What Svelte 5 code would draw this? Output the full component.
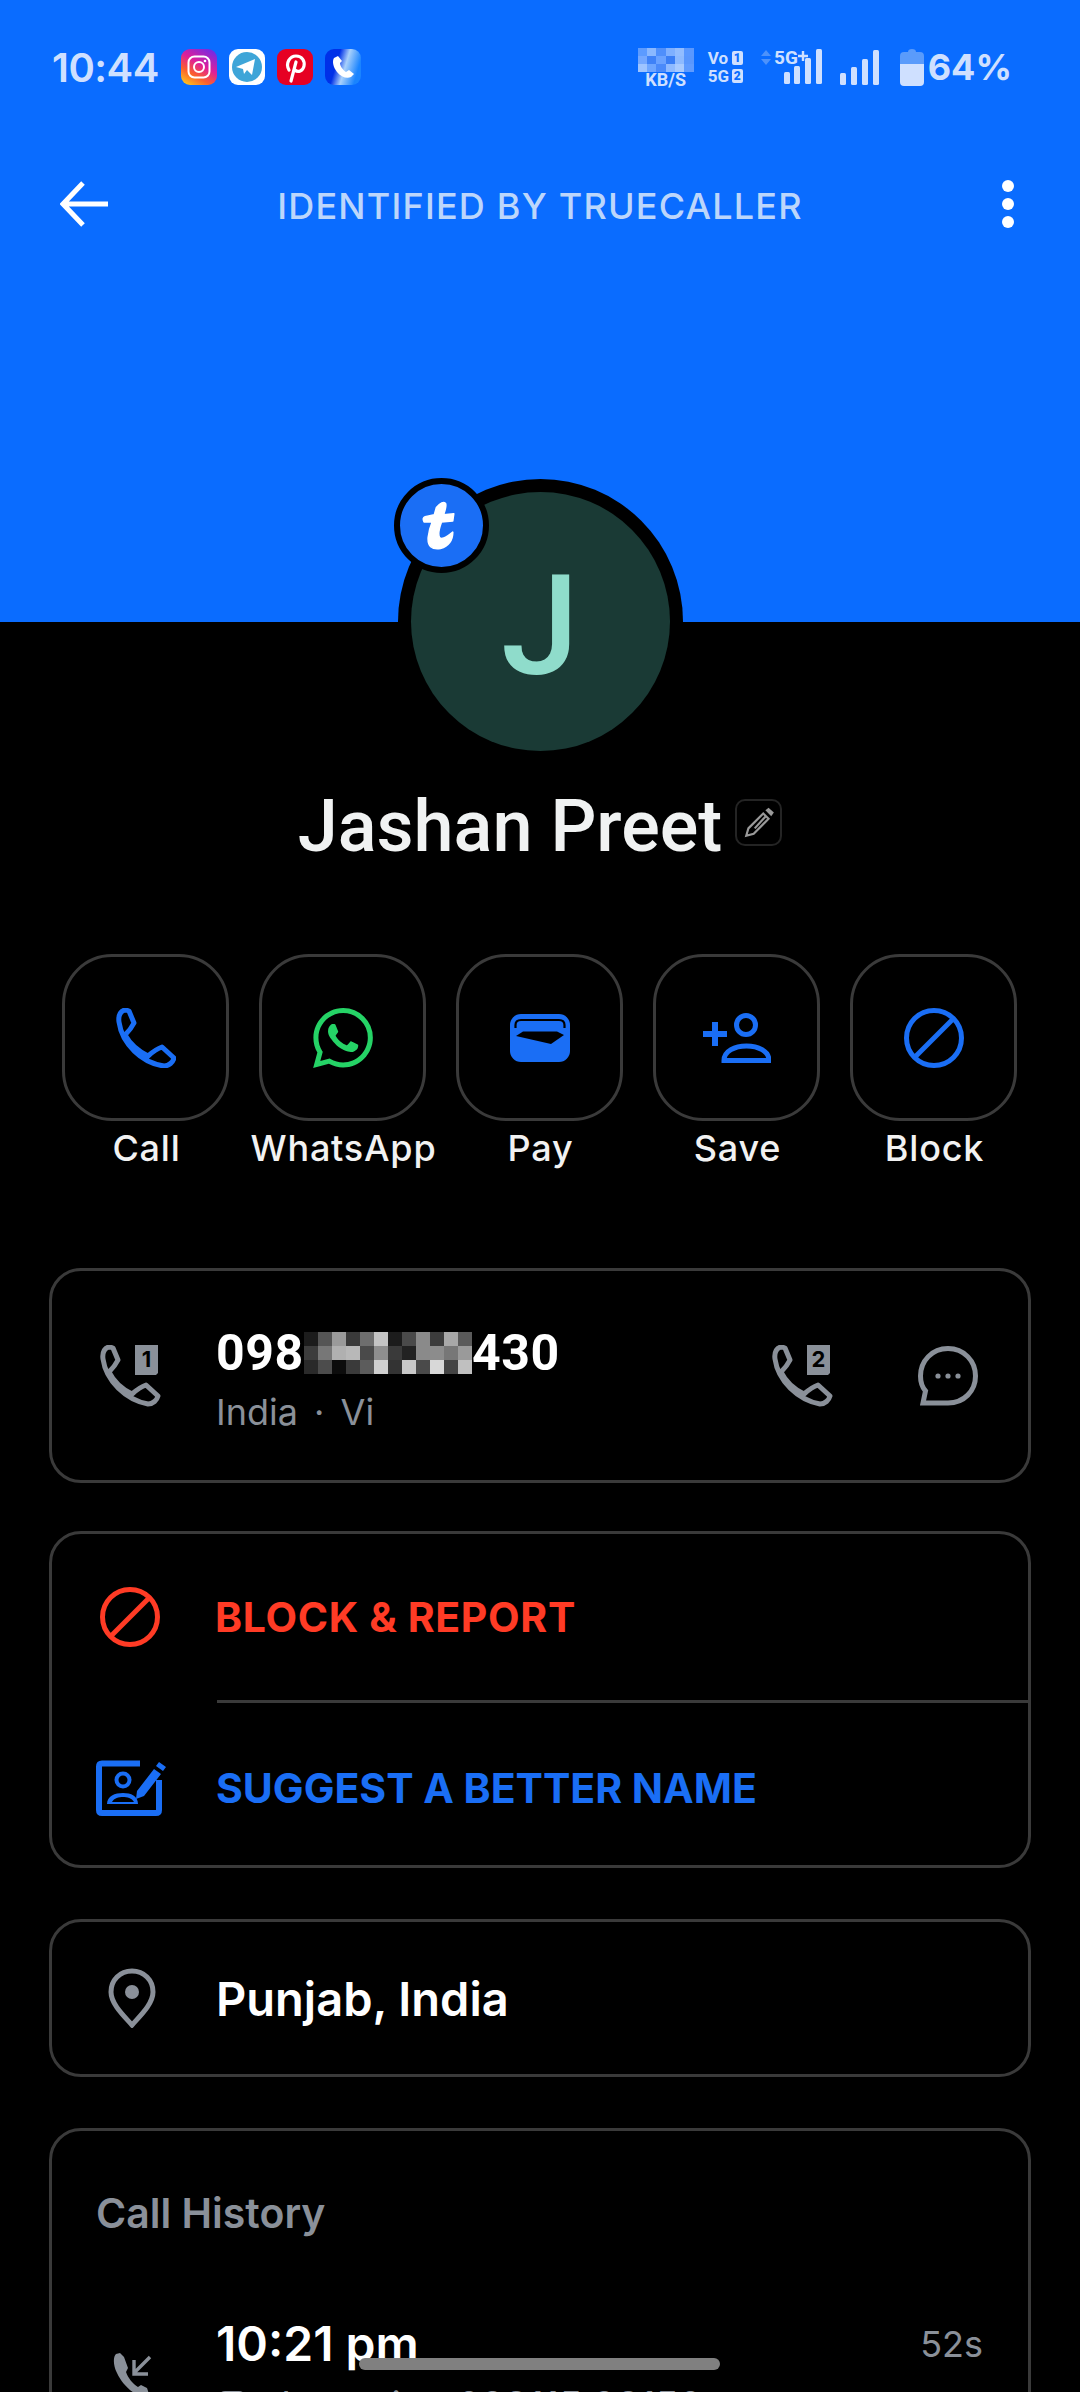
<script>
  const blue = '#1a6ef5';
  const actions = ['Call', 'WhatsApp', 'Pay', 'Save', 'Block'];
  const maskRows = [
    ['#1c1c1c','#555','#9a9a9a','#3a3a3a','#6e6e6e','#c4c4c4','#1c1c1c','#4a4a4a','#8a8a8a','#3c3c3c','#a8a8a8','#5a5a5a'],
    ['#3c3c3c','#777','#b0b0b0','#b8b8b8','#4a4a4a','#8e8e8e','#3a3a3a','#222','#8a8a8a','#8c8c8c','#777','#9a9a9a'],
    ['#2a2a2a','#4c4c4c','#0c0c0c','#3a3a3a','#5c5c5c','#d0d0d0','#333','#c8c8c8','#4a4a4a','#d8d8d8','#444','#c0c0c0']
  ];
  const speedMask = ['#5c9bff','#8ab8ff','#4f8ffb','#7fb0ff','#93bdff','#5a98ff','#74a8ff','#3f82f7','#6aa2ff','#3a7ef5','#8ebaff','#5a97fd','#9ec4ff','#6ea6ff','#4a8afa','#8fbaff','#a8caff','#5f9bff'];
</script>

<div class="screen">
  <header class="hero">
    <div class="status">
      <span class="time">10:44</span>
      <div class="apps">
        <svg class="app" viewBox="0 0 36 36">
          <defs>
            <linearGradient id="ig" x1="0.15" y1="1" x2="0.75" y2="0">
              <stop offset="0" stop-color="#fdc41e"/><stop offset=".3" stop-color="#fb5f2c"/><stop offset=".6" stop-color="#df1f9a"/><stop offset="1" stop-color="#7a2ae0"/>
            </linearGradient>
          </defs>
          <rect width="36" height="36" rx="9" fill="url(#ig)"/>
          <rect x="7.5" y="7.5" width="21" height="21" rx="6" fill="none" stroke="#fff" stroke-width="2"/>
          <circle cx="18" cy="18" r="5" fill="none" stroke="#fff" stroke-width="2"/>
          <circle cx="24" cy="12" r="1.3" fill="#fff"/>
        </svg>
        <svg class="app" viewBox="0 0 36 36">
          <rect width="36" height="36" rx="9" fill="#fff"/>
          <circle cx="18" cy="18" r="15" fill="#3ea5d8"/>
          <path d="M7 18 L26 10 L23 26 L18 21 L15 25 L14 20 Z" fill="#fff"/>
        </svg>
        <svg class="app" viewBox="0 0 36 36">
          <rect width="36" height="36" rx="9" fill="#e60023"/>
          <path d="M12 21 C8 14 13 7 19 7 C25 7 28 12 27 17 C26 22 21 24 18 21 M19 13 L14 32" fill="none" stroke="#fff" stroke-width="3.2" stroke-linecap="round"/>
        </svg>
        <svg class="app" viewBox="0 0 36 36">
          <defs>
            <linearGradient id="tc" x1="0" y1="0" x2="1" y2="0.3">
              <stop offset=".4" stop-color="#0030e8"/><stop offset=".65" stop-color="#a8d0fb"/><stop offset="1" stop-color="#1a84ff"/>
            </linearGradient>
          </defs>
          <rect width="36" height="36" rx="9" fill="url(#tc)"/>
          <path d="M9 9 C7 12 8 18 12 23 C16 28 22 30 26 28 L29 25 L24 21 L21 23 C18 21 15 17 15 14 L17 12 L13 7 Z" fill="#fff"/>
        </svg>
      </div>
      <div class="indicators">
        <div class="speed">
          <div class="speed-mask">
            {#each speedMask as c}<i style="background:{c}"></i>{/each}
          </div>
          <span>KB/S</span>
        </div>
        <div class="volte">
          <div><span>Vo</span><b>1</b></div>
          <div><span>5G</span><b>2</b></div>
        </div>
        <svg class="signal-a" viewBox="0 0 66 38">
          <path d="M1 8 L6 2 L11 8 Z M1 11 L6 17 L11 11 Z" fill="#4d92fb"/>
          <rect x="24" y="24" width="6" height="12" rx="1.5" fill="#cfe0ff"/>
          <rect x="34" y="18" width="6" height="18" rx="1.5" fill="#cfe0ff"/>
          <rect x="45" y="10" width="6" height="26" rx="1.5" fill="#cfe0ff"/>
          <rect x="56" y="1" width="6" height="35" rx="1.5" fill="#cfe0ff"/>
          <text x="14" y="16" class="fiveg">5G</text>
          <path d="M43 3 V13 M38 8 H48" stroke="#cfe0ff" stroke-width="2.4"/>
        </svg>
        <svg class="signal-b" viewBox="0 0 39 36">
          <rect x="0" y="24" width="6" height="12" rx="1.5" fill="#cfe0ff"/>
          <rect x="11" y="18" width="6" height="18" rx="1.5" fill="#cfe0ff"/>
          <rect x="22" y="10" width="6" height="26" rx="1.5" fill="#cfe0ff"/>
          <rect x="33" y="1" width="6" height="35" rx="1.5" fill="#cfe0ff"/>
        </svg>
        <svg class="battery" viewBox="0 0 24 37">
          <path d="M8 3 Q8 0 12 0 Q16 0 16 3 H20 Q24 3 24 7 V15 H0 V7 Q0 3 4 3 Z" fill="#5a9bfb"/>
          <path d="M0 15 H24 V33 Q24 37 20 37 H4 Q0 37 0 33 Z" fill="#cfe0ff"/>
        </svg>
        <span class="percent">64%</span>
      </div>
    </div>
    <div class="topbar">
      <svg class="back" viewBox="0 0 48 48">
        <path d="M23 3 L3 24 L23 45 M3 24 H48" fill="none" stroke="#fff" stroke-width="5"/>
      </svg>
      <span class="title">IDENTIFIED BY TRUECALLER</span>
      <div class="dots"><i></i><i></i><i></i></div>
    </div>
  </header>

  <div class="avatar-ring">
    <div class="avatar">J</div>
    <div class="badge">
      <svg viewBox="0 0 40 50" width="41" height="52">
        <path d="M15 7 Q21 0 24 3 Q25 6 22 14 L32 13 L31 20 L20 21 Q16 32 18 36 Q20 40 31 31 Q31 43 19 47 Q6 49 7 36 Q8 28 11 21 L3 21 Q1 17 4 16 L13 14 Z" fill="#fff" stroke="#fff" stroke-width="1.5" stroke-linejoin="round"/>
      </svg>
    </div>
  </div>

  <div class="name-row">
    <h1>Jashan Preet</h1>
    <span class="edit">
      <svg viewBox="0 0 32 32" width="34" height="34">
        <path d="M6 22 L20 8 L25 13 L11 27 L4 29 Z M12 22 L22 11" fill="none" stroke="#9a9a9a" stroke-width="2"/>
        <path d="M22 5 L25 2.5 L30 7 L27.5 10.5 Z" fill="#9a9a9a"/>
      </svg>
    </span>
  </div>

  <div class="actions">
    {#each actions as label, i}
      <div class="action">
        <div class="tile">
          {#if i === 0}
            <svg viewBox="0 0 60 60" width="60" height="60">
              <path d="M10 2 C5 2 2 7 3 14 C6 36 26 55 48 58 C53 58 57 54 58 50 L46 39 Q40 41 32 48 C22 43 14 36 9 27 Q15 21 18 15 L13 3 Z" fill="none" stroke={blue} stroke-width="5" stroke-linejoin="round"/>
            </svg>
          {:else if i === 1}
            <svg viewBox="0 0 24 24" width="60" height="60">
              <path fill="#25d366" d="M17.472 14.382c-.297-.149-1.758-.867-2.03-.967-.273-.099-.471-.148-.67.15-.197.297-.767.966-.94 1.164-.173.199-.347.223-.644.075-.297-.15-1.255-.463-2.39-1.475-.883-.788-1.48-1.761-1.653-2.059-.173-.297-.018-.458.13-.606.134-.133.298-.347.446-.52.149-.174.198-.298.298-.497.099-.198.05-.371-.025-.52-.075-.149-.669-1.612-.916-2.207-.242-.579-.487-.5-.669-.51-.173-.008-.371-.01-.57-.01-.198 0-.52.074-.792.372-.272.297-1.04 1.016-1.04 2.479 0 1.462 1.065 2.875 1.213 3.074.149.198 2.096 3.2 5.077 4.487.709.306 1.262.489 1.694.625.712.227 1.36.195 1.871.118.571-.085 1.758-.719 2.006-1.413.248-.694.248-1.289.173-1.413-.074-.124-.272-.198-.57-.347m-5.421 7.403h-.004a9.87 9.87 0 01-5.031-1.378l-.361-.214-3.741.982.998-3.648-.235-.374a9.86 9.86 0 01-1.51-5.26c.001-5.45 4.436-9.884 9.888-9.884 2.64 0 5.122 1.03 6.988 2.898a9.825 9.825 0 012.893 6.994c-.003 5.45-4.437 9.884-9.885 9.884m8.413-18.297A11.815 11.815 0 0012.05 0C5.495 0 .16 5.335.157 11.892c0 2.096.547 4.142 1.588 5.945L.057 24l6.305-1.654a11.882 11.882 0 005.683 1.448h.005c6.554 0 11.89-5.335 11.893-11.893a11.821 11.821 0 00-3.48-8.413z"/>
            </svg>
          {:else if i === 2}
            <svg viewBox="0 0 60 48" width="60" height="48">
              <rect width="60" height="48" rx="11" fill={blue}/>
              <path d="M5.5 14 V11 Q5.5 6 11 6 H49 Q54.5 6 54.5 11 V14" fill="none" stroke="#000" stroke-width="2.2"/>
              <path d="M6 22 L13 17.5 H47 L54 21 L41 30 Z" fill="#000"/>
            </svg>
          {:else if i === 3}
            <svg viewBox="0 0 68 50" width="68" height="50">
              <circle cx="43" cy="12" r="9.5" fill="none" stroke={blue} stroke-width="5"/>
              <path d="M0 21 H24 M12 9 V33" stroke={blue} stroke-width="6"/>
              <path d="M21 47.5 C21 38 32 33 43.5 33 C55 33 66 38 66 47.5 Z" fill="none" stroke={blue} stroke-width="5"/>
            </svg>
          {:else}
            <svg viewBox="0 0 60 60" width="60" height="60">
              <circle cx="30" cy="30" r="27.5" fill="none" stroke={blue} stroke-width="5"/>
              <path d="M11 49 L49 11" stroke={blue} stroke-width="5"/>
            </svg>
          {/if}
        </div>
        <span class="action-label">{label}</span>
      </div>
    {/each}
  </div>

  <section class="card number-card">
    <svg class="line-icon" viewBox="0 0 62 62" width="62" height="62">
      <path d="M10 2 C5 2 2 7 3 14 C6 36 26 55 48 59 C53 59 57 55 58 51 L46 40 Q40 42 32 49 C22 44 14 37 9 27 Q15 21 18 15 L13 3 Z" fill="none" stroke="#8a9099" stroke-width="5" stroke-linejoin="round"/>
      <path d="M35 0 H58 V28 L56 30 H35 Z" fill="#8a9099"/>
      <text x="46.5" y="22" class="sim">1</text>
    </svg>
    <div class="number-text">
      <div class="number">
        <span>098</span>
        <div class="mask">
          {#each maskRows as row}
            {#each row as c}<i style="background:{c}"></i>{/each}
          {/each}
        </div>
        <span>430</span>
      </div>
      <div class="carrier">India <em>·</em> Vi</div>
    </div>
    <svg class="sim-two" viewBox="0 0 62 62" width="62" height="62">
      <path d="M10 2 C5 2 2 7 3 14 C6 36 26 55 48 59 C53 59 57 55 58 51 L46 40 Q40 42 32 49 C22 44 14 37 9 27 Q15 21 18 15 L13 3 Z" fill="none" stroke="#8a9099" stroke-width="5" stroke-linejoin="round"/>
      <path d="M35 0 H58 V28 L56 30 H35 Z" fill="#8a9099"/>
      <text x="46.5" y="22" class="sim">2</text>
    </svg>
    <svg class="message" viewBox="0 0 60 60" width="60" height="60">
      <path d="M5 57 L7.5 45 C4 41 2.5 36 2.5 30 C2.5 15 14 2.5 30 2.5 C46 2.5 57.5 15 57.5 30 C57.5 45 46 57 30 57 Z" fill="none" stroke="#8a9099" stroke-width="5"/>
      <circle cx="20" cy="30" r="2.6" fill="#8a9099"/><circle cx="30" cy="30" r="2.6" fill="#8a9099"/><circle cx="40" cy="30" r="2.6" fill="#8a9099"/>
    </svg>
  </section>

  <section class="card actions-card">
    <div class="row row-red">
      <svg viewBox="0 0 60 60" width="60" height="60">
        <circle cx="30" cy="30" r="27.5" fill="none" stroke="#ff3b25" stroke-width="5"/>
        <path d="M11 49 L49 11" stroke="#ff3b25" stroke-width="5"/>
      </svg>
      <span>BLOCK &amp; REPORT</span>
    </div>
    <div class="divider"></div>
    <div class="row row-blue">
      <svg viewBox="0 0 70 56" width="70" height="56">
        <path d="M44 3.5 H6 Q3 3.5 3 6.5 V50 Q3 53 6 53 H60 Q63 53 63 50 V20" fill="none" stroke={blue} stroke-width="6"/>
        <path d="M41 31 L58 9 L65 14 L48 36 L40 39 Z M60 6 L63 2 L70 7 L67 11 Z" fill={blue}/>
        <circle cx="27" cy="20" r="6.5" fill="none" stroke={blue} stroke-width="4"/>
        <path d="M11 44 C11 36 19 33 27 33 C35 33 42 36 42 44 Z M16 42 H38 C36 38 31 37 27 37 C23 37 18 38 16 42 Z" fill={blue} fill-rule="evenodd"/>
      </svg>
      <span>SUGGEST A BETTER NAME</span>
    </div>
  </section>

  <section class="card place-card">
    <svg viewBox="0 0 48 60" width="48" height="60">
      <path d="M24 3 C12 3 3 12 3 24 C3 36 16 48 24 57 C32 48 45 36 45 24 C45 12 36 3 24 3 Z" fill="none" stroke="#8a9099" stroke-width="5"/>
      <circle cx="24" cy="24" r="7" fill="#8a9099"/>
    </svg>
    <span>Punjab, India</span>
  </section>

  <section class="card history-card">
    <h2>Call History</h2>
    <div class="call">
      <svg class="call-icon" viewBox="0 0 40 48" width="40" height="48">
        <path d="M3 3 C0 6 0 14 4 22 C9 33 20 44 31 46 L36 43 L34 37 L28 34 L25 36 C20 33 15 27 13 21 L15 17 L11 6 L7 2 Z" fill="#8a9099"/>
        <path d="M37 6 L21 22 M21 9 V23 H35" fill="none" stroke="#8a9099" stroke-width="3.4"/>
      </svg>
      <div class="call-text">
        <div class="call-time">10:21 pm</div>
        <div class="call-line">
          <svg viewBox="0 0 32 32" width="32" height="32"><rect x="2" y="2" width="28" height="28" rx="7" fill="#8a9099"/></svg>
          <span>Incoming 098115 98150</span>
        </div>
      </div>
      <span class="duration">52s</span>
    </div>
  </section>

  <div class="gesture"></div>
</div>

<style>
  :global(body) {
    margin: 0;
    background: #000;
  }

  .screen {
    position: relative;
    width: 1080px;
    height: 2392px;
    overflow: hidden;
    background: #000;
    color: #fff;
    font-family: Inter, "Noto Sans", sans-serif;
  }

  .hero {
    height: 622px;
    background: #0a6cff;
  }

  .status {
    display: flex;
    align-items: center;
    height: 36px;
    padding: 49px 68px 0 52px;
    color: #cfe0ff;
  }

  .time {
    width: 129px;
    font-size: 40px;
    font-weight: 600;
    letter-spacing: -0.5px;
  }

  .apps {
    display: flex;
    gap: 12px;
  }

  .app {
    width: 36px;
    height: 36px;
  }

  .indicators {
    display: flex;
    align-items: center;
    margin-left: auto;
  }

  .speed {
    display: flex;
    flex-direction: column;
    align-items: center;
    width: 56px;
    font-family: Roboto, sans-serif;
    font-size: 18px;
    font-weight: 700;
    line-height: 14px;
  }

  .speed-mask {
    display: grid;
    grid-template-columns: repeat(6, 1fr);
    width: 56px;
    height: 24px;
    margin-bottom: 1px;
  }

  .speed-mask i {
    display: block;
  }

  .volte {
    display: flex;
    flex-direction: column;
    gap: 4px;
    margin-left: 14px;
    font-family: Roboto, sans-serif;
    font-size: 17px;
    font-weight: 700;
    line-height: 14px;
  }

  .volte div {
    display: flex;
    align-items: center;
    justify-content: space-between;
    width: 35px;
  }

  .volte b {
    width: 11px;
    height: 14px;
    border-radius: 2px;
    background: #cfe0ff;
    color: #0a6cff;
    font-size: 12px;
    line-height: 14px;
    text-align: center;
  }

  .signal-a {
    width: 66px;
    height: 38px;
    margin-left: 17px;
  }

  .fiveg {
    fill: #cfe0ff;
    font-family: Roboto, sans-serif;
    font-size: 19px;
    font-weight: 700;
  }

  .signal-b {
    width: 39px;
    height: 36px;
    margin-left: 14px;
  }

  .battery {
    width: 24px;
    height: 37px;
    margin-left: 21px;
  }

  .percent {
    margin-left: 4px;
    font-size: 36px;
    font-weight: 700;
  }

  .topbar {
    display: flex;
    align-items: center;
    justify-content: space-between;
    height: 50px;
    margin-top: 94px;
    padding: 0 66px 0 60px;
  }

  .back {
    width: 48px;
    height: 48px;
  }

  .title {
    position: absolute;
    left: 0;
    right: 0;
    padding-top: 3px;
    text-align: center;
    color: #bcd6fb;
    font-size: 36px;
    font-weight: 500;
    letter-spacing: 1.2px;
  }

  .dots {
    display: flex;
    flex-direction: column;
    gap: 6px;
  }

  .dots i {
    width: 12px;
    height: 12px;
    border-radius: 50%;
    background: #fff;
  }

  .avatar-ring {
    position: relative;
    display: flex;
    align-items: center;
    justify-content: center;
    width: 285px;
    height: 285px;
    margin: -143px auto 0;
    border-radius: 50%;
    background: #000;
  }

  .avatar {
    width: 259px;
    height: 259px;
    border-radius: 50%;
    background: #1a3a35;
    color: #8fdccb;
    font-family: Roboto, sans-serif;
    font-size: 140px;
    font-weight: 500;
    line-height: 268px;
    text-align: center;
  }

  .badge {
    position: absolute;
    left: -4px;
    top: -1px;
    display: flex;
    align-items: center;
    justify-content: center;
    box-sizing: border-box;
    width: 95px;
    height: 95px;
    border: 6px solid #000;
    border-radius: 50%;
    background: #1a6ef5;
  }

  .name-row {
    display: flex;
    align-items: center;
    justify-content: center;
    gap: 13px;
    height: 80px;
    margin-top: 22px;
  }

  h1 {
    margin: 0;
    color: #f0f2f2;
    font-family: Roboto, sans-serif;
    font-size: 72px;
    font-weight: 500;
  }

  .edit {
    display: flex;
    align-items: center;
    justify-content: center;
    box-sizing: border-box;
    width: 47px;
    height: 47px;
    margin-top: -8px;
    border: 2px solid #242424;
    border-radius: 10px;
  }

  .actions {
    display: grid;
    grid-template-columns: repeat(5, 167px);
    column-gap: 30px;
    margin-top: 88px;
    padding-left: 62px;
  }

  .action {
    display: flex;
    flex-direction: column;
    align-items: center;
  }

  .tile {
    display: flex;
    align-items: center;
    justify-content: center;
    box-sizing: border-box;
    width: 167px;
    height: 167px;
    border: 3px solid #3a3a3a;
    border-radius: 50px;
  }

  .action-label {
    margin-top: 6px;
    padding-left: 2px;
    color: #f2f2f2;
    font-size: 36px;
    font-weight: 500;
    line-height: 42px;
    letter-spacing: 0.8px;
    white-space: nowrap;
  }

  .card {
    box-sizing: border-box;
    width: 982px;
    margin-left: 49px;
    border: 3px solid #3a3a3a;
    border-radius: 32px;
  }

  .number-card {
    display: flex;
    align-items: center;
    height: 215px;
    margin-top: 99px;
    padding: 0 50px 0 48px;
  }

  .number-text {
    margin-left: 54px;
    padding-top: 8px;
  }

  .number {
    display: flex;
    align-items: center;
    font-family: Roboto, sans-serif;
    font-size: 50px;
    font-weight: 700;
    line-height: 52px;
    letter-spacing: 0.6px;
  }

  .mask {
    display: grid;
    grid-template-columns: repeat(12, 14px);
    grid-auto-rows: 14px;
  }

  .mask i {
    display: block;
  }

  .carrier {
    margin-top: 12px;
    color: #8a9099;
    font-size: 36px;
    line-height: 42px;
  }

  .carrier em {
    margin: 0 6px;
    font-style: normal;
  }

  .sim {
    fill: #000;
    font-size: 22px;
    font-weight: 700;
    text-anchor: middle;
  }

  .sim-two {
    margin-left: auto;
  }

  .message {
    margin-left: 84px;
  }

  .actions-card {
    height: 337px;
    margin-top: 48px;
  }

  .row {
    display: flex;
    align-items: center;
    height: 166px;
    padding-left: 48px;
    font-size: 41px;
    font-weight: 700;
  }

  .row svg {
    flex: none;
  }

  .row span {
    margin-left: 55px;
  }

  .row-red {
    color: #ff3b25;
    letter-spacing: 0.65px;
  }

  .row-blue {
    box-sizing: border-box;
    padding-top: 4px;
    padding-left: 44px;
    color: #1a6ef5;
  }

  .row-blue span {
    margin-left: 50px;
  }

  .divider {
    height: 3px;
    margin-left: 165px;
    background: #3a3a3a;
  }

  .place-card {
    display: flex;
    align-items: center;
    height: 158px;
    margin-top: 51px;
    padding-left: 56px;
    font-size: 47px;
    font-weight: 600;
  }

  .place-card span {
    margin-left: 60px;
  }

  .history-card {
    height: 400px;
    margin-top: 51px;
    padding: 58px 44px 0;
  }

  h2 {
    margin: 0;
    color: #8a9099;
    font-size: 41px;
    font-weight: 600;
    line-height: 48px;
  }

  .call {
    display: flex;
    align-items: flex-start;
    margin-top: 80px;
  }

  .call-icon {
    margin: 34px 0 0 17px;
  }

  .call-text {
    margin-left: 63px;
  }

  .call-time {
    font-size: 48px;
    font-weight: 600;
    line-height: 54px;
  }

  .call-line {
    display: flex;
    align-items: center;
    gap: 33px;
    margin-top: 11px;
    color: #8a9099;
    font-size: 38px;
  }

  .duration {
    margin-left: auto;
    padding-right: 1px;
    color: #8a9099;
    font-size: 36px;
    line-height: 54px;
  }

  .gesture {
    position: absolute;
    left: 359px;
    top: 2358px;
    width: 361px;
    height: 12px;
    border-radius: 6px;
    background: #808080;
  }
</style>
